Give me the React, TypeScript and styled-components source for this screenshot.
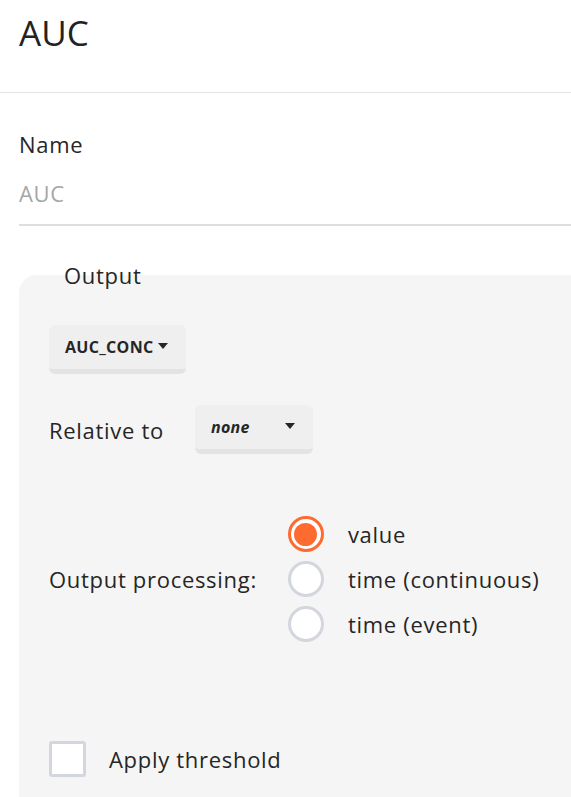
import React, { useState } from 'react';
import styled, { createGlobalStyle } from 'styled-components';

const GlobalStyle = createGlobalStyle`
  html, body {
    margin: 0;
    padding: 0;
    background: #ffffff;
  }
  body {
    font-family: "Open Sans", "Noto Sans", sans-serif;
    color: #262626;
  }
`;

const Page = styled.div`
  width: 100%;
  height: 797px;
  overflow: hidden;
`;

const Header = styled.header`
  height: 93px;
  padding: 10px 0 0 19px;
  box-sizing: border-box;
  border-bottom: 1px solid #e2e2e2;
`;

const Title = styled.h1`
  margin: 0;
  font-size: 35px;
  font-weight: 400;
  line-height: 46px;
  color: #222;
`;

const Body = styled.div`
  padding: 37px 0 0 19px;
`;

const FieldLabel = styled.label`
  display: block;
  font-size: 22px;
  letter-spacing: 0.7px;
  line-height: 28px;
  color: #262626;
`;

const TextInput = styled.input`
  display: block;
  width: 100%;
  box-sizing: border-box;
  margin-top: 21px;
  padding: 0 0 17px 0;
  border: none;
  border-bottom: 2px solid #dedede;
  background: transparent;
  font-family: inherit;
  font-size: 22px;
  letter-spacing: 0.7px;
  line-height: 28px;
  color: #262626;
  outline: none;

  &::placeholder {
    color: #a6a6a6;
  }
`;

const Panel = styled.fieldset`
  margin: 35px 0 0 0;
  padding: 36px 30px 60px 30px;
  border: none;
  border-radius: 18px 0 0 0;
  background: #f5f5f5;
`;

const Legend = styled.legend`
  margin-left: 15px;
  padding: 0;
  font-size: 22px;
  letter-spacing: 0.7px;
  line-height: 28px;
  color: #262626;
`;

const DropButton = styled.button<{ $italic?: boolean; $width?: number }>`
  display: inline-flex;
  align-items: center;
  justify-content: space-between;
  gap: 5px;
  box-sizing: border-box;
  height: 49px;
  width: ${p => (p.$width ? `${p.$width}px` : 'auto')};
  padding: 0 18px 0 16px;
  border: none;
  border-bottom: 5px solid #e3e3e3;
  border-radius: 6px;
  background: #efefef;
  font-family: inherit;
  font-size: 16px;
  letter-spacing: 0.3px;
  font-weight: 700;
  font-style: ${p => (p.$italic ? 'italic' : 'normal')};
  color: #262626;
  cursor: pointer;
`;

const Caret = styled.span`
  width: 0;
  height: 0;
  border-left: 5px solid transparent;
  border-right: 5px solid transparent;
  border-top: 6px solid #262626;
  margin-top: -3px;
`;

const Row = styled.div<{ $mt: number; $gap: number }>`
  display: flex;
  align-items: center;
  gap: ${p => p.$gap}px;
  margin-top: ${p => p.$mt}px;
`;

const RowLabel = styled.span`
  font-size: 22px;
  letter-spacing: 0.7px;
  line-height: 28px;
  color: #262626;
`;

const RadioGroup = styled.div`
  display: flex;
  flex-direction: column;
  gap: 9px;
`;

const RadioOption = styled.label`
  display: flex;
  align-items: center;
  gap: 24px;
  cursor: pointer;
  font-size: 22px;
  letter-spacing: 0.7px;
  line-height: 28px;
  color: #262626;
`;

const RadioCircle = styled.span<{ $checked: boolean }>`
  box-sizing: border-box;
  width: 36px;
  height: 36px;
  border-radius: 50%;
  border: 3px solid ${p => (p.$checked ? '#fd6b31' : '#d3d7dd')};
  background: #ffffff;
  display: flex;
  align-items: center;
  justify-content: center;

  &::after {
    content: '';
    width: 23px;
    height: 23px;
    border-radius: 50%;
    background: ${p => (p.$checked ? '#fd6b31' : 'transparent')};
  }
`;

const CheckRow = styled.label`
  display: flex;
  align-items: center;
  gap: 23px;
  margin-top: 99px;
  font-size: 22px;
  letter-spacing: 0.7px;
  line-height: 28px;
  color: #262626;
  cursor: pointer;
`;

const CheckBox = styled.span`
  box-sizing: border-box;
  width: 37px;
  height: 36px;
  border: 3px solid #d3d7dd;
  border-radius: 3px;
  background: #ffffff;
`;

const options = ['value', 'time (continuous)', 'time (event)'];

export default function App() {
  const [selected, setSelected] = useState('value');

  return (
    <Page>
      <GlobalStyle />
      <Header>
        <Title>AUC</Title>
      </Header>
      <Body>
        <FieldLabel htmlFor="name">Name</FieldLabel>
        <TextInput id="name" placeholder="AUC" />

        <Panel>
          <Legend>Output</Legend>
          <DropButton>
            AUC_CONC
            <Caret />
          </DropButton>

          <Row $mt={31} $gap={31}>
            <RowLabel>Relative to</RowLabel>
            <DropButton $italic $width={118}>
              none
              <Caret />
            </DropButton>
          </Row>

          <Row $mt={62} $gap={31}>
            <RowLabel>Output processing:</RowLabel>
            <RadioGroup>
              {options.map(opt => (
                <RadioOption key={opt} onClick={() => setSelected(opt)}>
                  <RadioCircle $checked={selected === opt} />
                  {opt}
                </RadioOption>
              ))}
            </RadioGroup>
          </Row>

          <CheckRow>
            <CheckBox />
            Apply threshold
          </CheckRow>
        </Panel>
      </Body>
    </Page>
  );
}
